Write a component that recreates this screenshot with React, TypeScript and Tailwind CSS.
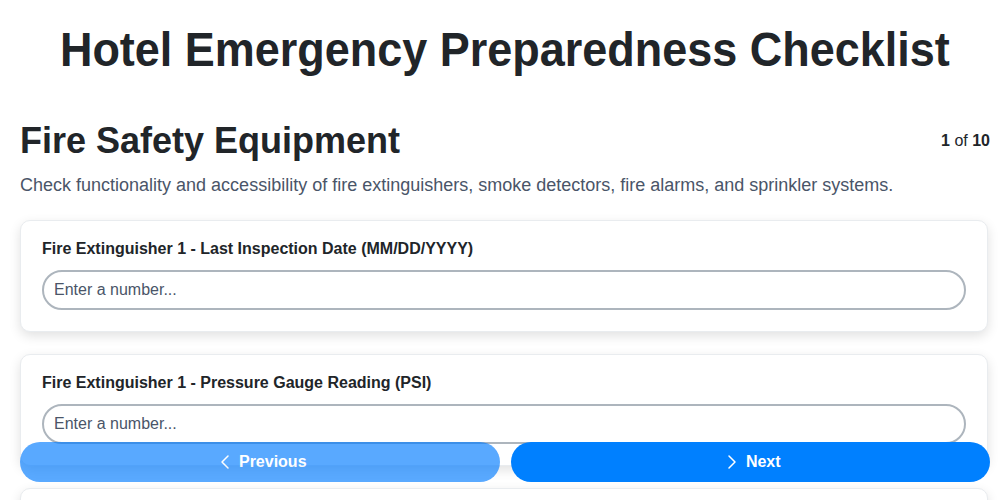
import React from "react";
import { ChevronLeft, ChevronRight } from "lucide-react";

const fields = [
  "Fire Extinguisher 1 - Last Inspection Date (MM/DD/YYYY)",
  "Fire Extinguisher 1 - Pressure Gauge Reading (PSI)",
  "Fire Extinguisher 2 - Last Inspection Date (MM/DD/YYYY)",
  "Fire Extinguisher 2 - Pressure Gauge Reading (PSI)",
];

export default function App() {
  return (
    <div className="min-h-screen bg-white text-[#212529] font-['Liberation_Sans',Arial,sans-serif]">
      <div className="pl-5 pr-[10px] pb-24">
        <h1 className="pt-[26px] text-center text-[48px] leading-none font-bold">
          <span className="inline-block scale-x-[0.937]">Hotel Emergency Preparedness Checklist</span>
        </h1>

        <div className="mt-[47px] flex items-start justify-between">
          <h2 className="text-4xl font-bold">Fire Safety Equipment</h2>
          <div className="mt-[8px] text-base">
            <span className="font-bold">1</span> of <span className="font-bold">10</span>
          </div>
        </div>
        <p className="mt-[10px] text-lg leading-7 text-[#4a5568]">
          Check functionality and accessibility of fire extinguishers, smoke detectors, fire alarms, and sprinkler systems.
        </p>

        <div className="mt-[21px] mr-[2px] flex flex-col gap-[22px]">
          {fields.map((f) => (
            <div
              key={f}
              className="rounded-[10px] border border-[#e9ecef] bg-white px-[21px] pt-[18px] pb-[21px] shadow-[0_4px_12px_rgba(0,0,0,0.12)]"
            >
              <label className="block text-base leading-5 font-bold">{f}</label>
              <input
                type="text"
                placeholder="Enter a number..."
                className="mt-[11px] block h-10 w-full rounded-full border-2 border-[#adb5bd] px-[10px] text-base text-[#212529] placeholder:text-[#4a5568] outline-none"
              />
            </div>
          ))}
        </div>
      </div>

      <div className="fixed bottom-[18px] left-5 right-[10px] flex gap-[11px]">
        <button
          type="button"
          disabled
          className="flex h-10 flex-1 items-center justify-center gap-[2px] rounded-full bg-[#007bff] text-base font-bold text-white opacity-65"
        >
          <ChevronLeft size={24} strokeWidth={1.5} />
          Previous
        </button>
        <button
          type="button"
          className="flex h-10 flex-1 items-center justify-center gap-[2px] rounded-full bg-[#0080ff] text-base font-bold text-white"
        >
          <ChevronRight size={24} strokeWidth={1.5} />
          Next
        </button>
      </div>
    </div>
  );
}
